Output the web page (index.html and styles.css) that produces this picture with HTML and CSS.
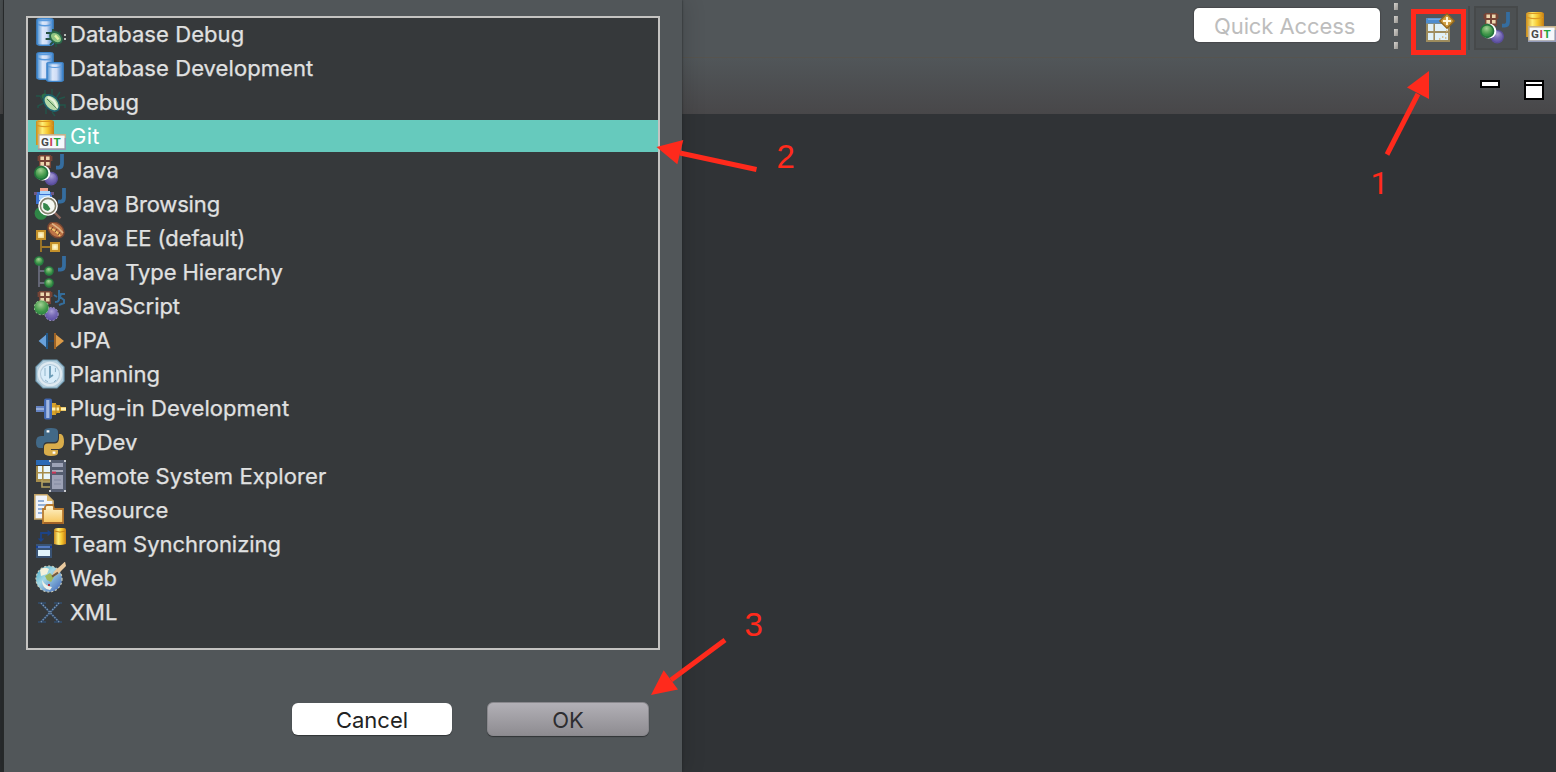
FILE: index.html
```html
<!DOCTYPE html>
<html lang="en">
<head>
<meta charset="utf-8">
<title>Open Perspective</title>
<link rel="stylesheet" href="styles.css">
</head>
<body>
<svg class="defs" width="0" height="0" aria-hidden="true">
  <defs>
    <linearGradient id="blue"><stop offset="0" stop-color="#4b8fd0"/><stop offset=".35" stop-color="#dde8fa"/><stop offset=".6" stop-color="#cfdcf5"/><stop offset="1" stop-color="#3b7fc6"/></linearGradient>
    <linearGradient id="gold"><stop offset="0" stop-color="#c98a1c"/><stop offset=".35" stop-color="#fff07a"/><stop offset=".65" stop-color="#f6c62e"/><stop offset="1" stop-color="#c47d16"/></linearGradient>
    <radialGradient id="green" cx=".45" cy=".3" r=".65"><stop offset="0" stop-color="#a3d296"/><stop offset=".45" stop-color="#62ab60"/><stop offset=".75" stop-color="#3c9448"/><stop offset="1" stop-color="#2f8644"/></radialGradient>
    <radialGradient id="purple" cx=".5" cy=".3" r=".65"><stop offset="0" stop-color="#aaa0d6"/><stop offset=".5" stop-color="#7a6db8"/><stop offset="1" stop-color="#5f52a5"/></radialGradient>
    <linearGradient id="folder" x2="0" y2="1"><stop offset="0" stop-color="#fff6d2"/><stop offset="1" stop-color="#f7c55c"/></linearGradient>
    <radialGradient id="sq"><stop offset="0" stop-color="#fffbe0"/><stop offset="1" stop-color="#f0d474"/></radialGradient>
    <linearGradient id="globe" x2="1" y2="1"><stop offset="0" stop-color="#36a5c4"/><stop offset=".4" stop-color="#a3d8e6"/><stop offset="1" stop-color="#3b5fb6"/></linearGradient>

    <symbol id="bluecyl" viewBox="0 0 9 14" preserveAspectRatio="none">
      <path d="M.5 1Q.5 .4 2 .4H7Q8.500 .4 8.500 1V13Q8 13.600 7 13.600H2Q1 13.600 .5 13Z" fill="url(#blue)" stroke="#3f86cc" stroke-width=".8"/>
      <path d="M1 1.200H8M1 3.200Q4.500 4.500 8 3.200" fill="none" stroke="#5a9ade" stroke-width=".8"/>
    </symbol>
    <symbol id="grid" viewBox="0 0 8 7">
      <path d="M1 .5H7V1H7.700V3.500H7V7H1V3.500H.3V1H1Z" fill="#764436"/>
      <path d="M1.700 1.300H3.500V3H1.700ZM4.500 1.300H6.300V3H4.500ZM1.700 4H3.500V5.700H1.700ZM4.500 4H6.300V5.700H4.500Z" fill="#ecd6ad"/>
    </symbol>
    <symbol id="jay" viewBox="0 0 4 8"><path d="M3 0V4.800Q3 6.800 1.400 6.800H0" fill="none" stroke="#356d9f" stroke-width="1.900"/></symbol>

    <symbol id="i-dbdebug" viewBox="0 0 16 16">
      <use href="#bluecyl" x="1" y="0" width="9" height="14"/>
      <path d="M6 7.500H8L9.500 9M5.800 10.500H9M9.500 5.500V8M8 13.500L10 11.500M11 14.500V12M12 8L13.300 6.500" fill="none" stroke="#24503f" stroke-width=".9"/>
      <ellipse cx="11" cy="9.800" rx="3.300" ry="2.400" transform="rotate(40 11 9.800)" fill="#8fc583" stroke="#2b6a4b" stroke-width=".9"/>
      <path d="M10.500 8.700L12.300 10.700" stroke="#e3f3a8" stroke-width="1.200"/>
      <path d="M15 8.500H16M15 10.500H16" stroke="#b8beba" stroke-width=".9"/>
    </symbol>
    <symbol id="i-dbdev" viewBox="0 0 16 16">
      <use href="#bluecyl" x="1" y="0" width="9" height="14"/>
      <use href="#bluecyl" x="6" y="5" width="9" height="10"/>
    </symbol>
    <symbol id="i-debug" viewBox="0 0 16 16">
      <path d="M5.500 2V4.500L3.500 5M1 5H3L5 8.500L2 10V11M6 11V14M9 13L10.500 15M9 1.500V4.500L11 6L13 3M12.500 6.500L15.500 5.500M13 9.500H15.500V11" fill="none" stroke="#23554a" stroke-width=".7"/>
      <circle cx="5.300" cy="5.200" r="1.400" fill="#2f7048"/>
      <ellipse cx="8.800" cy="8.500" rx="4.700" ry="3.100" transform="rotate(47 8.800 8.500)" fill="#b5d9a8" stroke="#1d6370" stroke-width=".8"/>
      <path d="M6.800 5.700Q10.500 6.500 11.500 11" fill="none" stroke="#e7f3dc" stroke-width="1.100"/>
      <path d="M6.500 6.500L11.300 11.200" stroke="#467e51" stroke-width=".5"/>
    </symbol>
    <symbol id="i-git" viewBox="0 0 16 16">
      <path d="M1 .8Q1.400 0 2.500 0H8.500Q9.700 0 10 .8V12.500H1Z" fill="url(#gold)"/>
      <path d="M1.500 2.700Q5.500 4 9.500 2.700M2 .7H9" fill="none" stroke="#dc9822" stroke-width=".6"/>
      <rect x="2.400" y="7.400" width="13.300" height="7.200" fill="#f5f8fc" stroke="#c5b18b" stroke-width=".8"/>
      <path d="M2 14.600H16M15.700 9V14.600" stroke="#929bb9" stroke-width=".8"/>
      <text x="3.500" y="13.100" class="git-label" fill="#4a4a4a">G</text>
      <text x="7.800" y="13.100" class="git-label" fill="#c93d55">I</text>
      <text x="9.800" y="13.100" class="git-label" fill="#23a340">T</text>
    </symbol>
    <symbol id="i-java" viewBox="0 0 16 16">
      <use href="#grid" x="1.500" y="0" width="8" height="7"/>
      <use href="#jay" x="11" y="0" width="4" height="8"/>
      <circle cx="8.600" cy="12.300" r="3.100" fill="url(#purple)" stroke="#5a4e9b" stroke-width=".6"/>
      <circle cx="4.400" cy="9.500" r="3.800" fill="#fff"/>
      <circle cx="3.600" cy="9.500" r="3.200" fill="url(#green)" stroke="#23733c" stroke-width=".8"/>
    </symbol>
    <symbol id="i-browse" viewBox="0 0 16 16">
      <circle cx="3.500" cy="12.700" r="3.200" fill="#2f8646"/>
      <path d="M0 2H10V3.500H9V8H1V3.500H0Z" fill="#3d73d1"/>
      <path d="M3 1.500H8V3H3ZM2.500 3.500H8V6H2.500Z" fill="#a9d4fb"/>
      <path d="M3 0H7V1.500H3Z" fill="#f0a08c"/><path d="M0 2H1.500V3.500H0ZM8.500 2H10V3.500H8.500Z" fill="#705a86"/>
      <use href="#jay" x="12" y="0" width="4" height="8"/>
      <path d="M9.500 11.500L13.200 15.200" stroke="#8a655b" stroke-width="1.200"/>
      <circle cx="7" cy="9" r="4.900" fill="#fff"/>
      <circle cx="7" cy="9" r="3.800" fill="#f4f8f2" stroke="#85836f" stroke-width=".8"/>
      <path d="M4.600 10V7.500Q6.500 7 8.200 10.500L7 11.500Q5.500 11.500 4.600 10Z" fill="#36874b"/>
    </symbol>
    <symbol id="i-jee" viewBox="0 0 16 16">
      <path d="M3.500 8V15M3.500 12.500H8" stroke="#a27a28" stroke-width=".9" fill="none"/>
      <rect x="1.500" y="4.500" width="4" height="4" fill="url(#sq)" stroke="#c3902a"/>
      <rect x="8.500" y="10.500" width="4" height="4" fill="url(#sq)" stroke="#c3902a"/>
      <ellipse cx="11" cy="4" rx="4.500" ry="3.300" transform="rotate(42 11 4)" fill="#bd7346" stroke="#764531" stroke-width=".7"/>
      <path d="M9 .8Q12.500 3 14.500 5.500" stroke="#deb78a" stroke-width=".8" fill="none"/>
      <path d="M7.600 3Q10.500 3.500 13 7" stroke="#f1c36b" stroke-width=".9" fill="none"/>
      <path d="M8.500 4L9.500 2.500M10.500 5L11.500 3.500M12 6.500L13 5" stroke="#6b3a2a" stroke-width=".5"/>
    </symbol>
    <symbol id="i-type" viewBox="0 0 16 16">
      <path d="M2.500 4V15.500M2.500 7.500H6M2.500 13.500H6" stroke="#686b7b" stroke-width=".9" fill="none"/>
      <g fill="url(#green)" stroke="#277c40" stroke-width=".6"><circle cx="2.500" cy="2.500" r="2.100"/><circle cx="7.500" cy="7.500" r="2.100"/><circle cx="7.500" cy="13.500" r="2.100"/></g>
      <use href="#jay" x="12" y="0" width="4" height="8"/>
    </symbol>
    <symbol id="i-js" viewBox="0 0 16 16">
      <use href="#grid" x="1.500" y="0" width="8" height="7"/>
      <path d="M12.500 0V4.500Q12.500 6 10.500 6M10 2.500L11.500 3.500M15.500 2H13.500L13 3.500L15 5V6.500L12.500 7.500" fill="none" stroke="#346d9b" stroke-width="1"/>
      <circle cx="8.800" cy="12" r="3.300" fill="url(#purple)" stroke="#9d94c9" stroke-width=".5" stroke-dasharray="1 .8"/>
      <circle cx="3.700" cy="8.800" r="3.600" fill="url(#green)" stroke="#96c28f" stroke-width=".5" stroke-dasharray="1 1"/>
    </symbol>
    <symbol id="i-jpa" viewBox="0 0 16 16">
      <path d="M6 8.500H11" stroke="#244467" stroke-width=".7"/>
      <path d="M7 4.500V12.500L2.300 8.500Z" fill="#69a1db"/><path d="M6.500 4.500V12.500" stroke="#225889"/>
      <path d="M10 4.500V12.500L15 8.500Z" fill="#dc9b48"/><path d="M10.500 4.500V12.500" stroke="#9c6226"/>
    </symbol>
    <symbol id="i-plan" viewBox="0 0 16 16">
      <path d="M4.500 1H11.500L15 4.500V11.500L11.500 15H4.500L1 11.500V4.500Z" fill="#b4cedd" stroke="#719bb2" stroke-width=".6"/>
      <circle cx="8" cy="8" r="5.600" fill="#b3cbdc" stroke="#dfeaf1" stroke-width="1.100"/>
      <circle cx="8" cy="8" r="4.500" fill="#d9edfa"/>
      <path d="M8 4V9.500L9.500 8.500" fill="none" stroke="#6e9db8" stroke-width=".9"/><path d="M5.500 5V9M10.700 5V7M5.500 11L7 12M10 12L11 11" stroke="#8fb5cb" stroke-width=".5"/>
    </symbol>
    <symbol id="i-plug" viewBox="0 0 16 16">
      <rect x="1" y="7" width="4" height="3" fill="#6684c2"/><path d="M1 8.500H5" stroke="#96add9"/>
      <rect x="5" y="3.200" width="4" height="10.600" rx="1" fill="#4269b3"/><path d="M6.900 4V13" stroke="#a1b8e2" stroke-width="1.600"/>
      <path d="M9 5.500H11V6.500H13V7.500H16V9.500H13V10.500H11V11.500H9Z" fill="#d8a32a"/><path d="M9 8.500H12.500M13.500 8.500H16" stroke="#fff0ab" stroke-width="1.600"/>
      <path d="M11 6V11M13 7V10" stroke="#b8841e" stroke-width=".5"/>
    </symbol>
    <symbol id="i-py" viewBox="0 0 16 16">
      <path d="M5 5V2.500Q5 1 8.500 1Q12 1 12 2.700V6Q12 8 10 8H6.500Q4.500 8 4.500 11H3Q1 11 1 8.200Q1 5 3.500 5H8.500" fill="#426987"/>
      <path d="M12.500 4H13.500Q15 4.500 15 8Q15 11 12.500 11.500H8.500V12H12V13.500Q12 15 8.500 15Q5 15 5 13.300V10.500Q5 8.700 7 8.700H10.500Q12.500 8.700 12.500 6Z" fill="#d9ad4b"/>
      <path d="M6.300 2.700H7.700M9.300 13.300H10.700" stroke="#fff" stroke-width="1.200"/>
    </symbol>
    <symbol id="i-remote" viewBox="0 0 16 16">
      <path d="M1 0H8V2.500H1Z" fill="#2a6ab6"/><path d="M1 3H8V11H1Z" fill="#a68d4b"/>
      <path d="M2 3H4V6H2ZM4.800 3H8V6H4.800ZM2 6.700H4V9.500H2ZM4.800 6.700H8V9.500H4.800Z" fill="#e8f7fb"/>
      <path d="M4 10V13.500H8M4 11H8" fill="none" stroke="#b3a163" stroke-width=".8"/>
      <rect x="8" y="0" width="8" height="16" fill="#555d70"/>
      <path d="M9 1.500H14.500V3.500H9ZM9 7.500H14.500V14.500H9Z" fill="#9da2b6"/><path d="M9 5.500H14.500" stroke="#a9acbb" stroke-width="1"/>
      <path d="M9 6.300H11" stroke="#cb3656"/><path d="M10 10H13.500M10 12H13.500" stroke="#8188a0" stroke-width=".6"/>
      <path d="M7.500 .5H8.500M15 .5H16M7.500 15.500H8.500M15 15.500H16" stroke="#c8cbd0"/>
    </symbol>
    <symbol id="i-resource" viewBox="0 0 16 16">
      <path d="M.4 .4H6.500L9.600 3.500V12.500H.4Z" fill="#f0f4fb" stroke="#c1a266" stroke-width=".8"/><path d="M6.500 .4V3.500H9.600Z" fill="#dcb96f"/>
      <path d="M2 3.500H5M2 5.500H7M2 7.500H5M2 9.500H4" stroke="#7499cc" stroke-width=".8"/>
      <path d="M4.500 14V7.500H5.500V6.500L6.500 5.500H9.500L10 7.500H14.500V14.500H4.500Z" fill="url(#folder)" stroke="#b97a2e" stroke-width=".9"/>
      <path d="M6 6.700H9.500" stroke="#fff3ce"/><path d="M5 14.500H14.500" stroke="#945423" stroke-width=".6"/>
    </symbol>
    <symbol id="i-team" viewBox="0 0 16 16">
      <path d="M3.500 6V2.500H7.500" fill="none" stroke="#1d4385" stroke-width=".9"/><path d="M1.800 5.300L3.500 7L5.200 5.300ZM6.800 .9L8.800 2.500L6.800 4.100Z" fill="#1d4385"/>
      <path d="M10 .7Q10.500 0 12 0H14.500Q16 0 16 .7V8Q13 9 10 8Z" fill="url(#gold)"/><path d="M10 1.500Q13 2.600 16 1.500" stroke="#c98517" stroke-width=".5" fill="none"/>
      <rect x="1" y="8" width="8" height="7" fill="#395374"/><path d="M1 9.500H9" stroke="#163f99"/><path d="M2 9.500H8" stroke="#92b8eb" stroke-width=".5"/><path d="M2 11H8V14H2Z" fill="#e0f4fd"/>
    </symbol>
    <symbol id="i-web" viewBox="0 0 16 16">
      <circle cx="7.500" cy="8.500" r="6.500" fill="url(#globe)" stroke="#c7cdbc" stroke-width=".6" stroke-dasharray="1 1"/>
      <path d="M3 4Q5 2 7.500 3.500L6.500 6L3.500 7Z" fill="#f4f1dc"/><path d="M5.500 7L8 5.500L10 7.500L8.500 10L6.500 9Z" fill="#9eb85e"/>
      <path d="M4 9Q5.500 12 9 12.500L8 14Q4 13.500 4 9Z" fill="#f0f1e6"/><path d="M7 11.500H8" stroke="#aa3040"/>
      <path d="M9 7Q10 4 12 3L15.500 -.2L16 2L13 5Q11 7.500 9 7Z" fill="#e9c99e"/><path d="M9 7.300L12 5.300" stroke="#715a42"/>
    </symbol>
    <symbol id="i-xml" viewBox="0 0 16 16">
      <path d="M2 3.500H6M10 3.500H14M2 13H6M10 13H14" stroke="#334f70" stroke-width=".7"/>
      <path d="M3.500 3.500L12.500 13M12.500 3.500L3.500 13" stroke="#344f70" stroke-width="1"/>
      <path d="M3.500 3.500L12.500 13M12.500 3.500L3.500 13" stroke="#829bb5" stroke-width=".7" stroke-dasharray=".6 .8"/>
    </symbol>
    <symbol id="i-new" viewBox="0 0 16 16">
      <rect x="1" y="3" width="12" height="12" fill="#9e8c5d"/>
      <path d="M1.500 3H10.500L9 5.800H1V3.500Z" fill="#4d8dcf"/><path d="M2 3.600H9" stroke="#85b9e9" stroke-width=".5"/>
      <path d="M2 6H4.700V9.500H2ZM5.500 6H12V9.500H5.500ZM2 10.500H4.700V14H2ZM5.500 10.500H12V14H5.500Z" fill="#e0f1f8"/>
      <path d="M7.500 13.500H8.200M9 12.500H9.700M10.500 11H11.200M10.500 13H11.200M11 9.500H11.700" stroke="#d5b278" stroke-width=".8"/>
      <path d="M11.500 .9L15.100 4.500L11.500 8.100L7.900 4.500Z" fill="#cf9f42" stroke="#95681b" stroke-width=".7"/><path d="M11.500 2.500V6.500M9.500 4.500H13.500" stroke="#fff8dc" stroke-width="1"/>
    </symbol>
  </defs>
</svg>

<div class="screen">
  <div class="edge"></div>
  <section class="dialog">
    <ul class="list">
      <li class="row"><svg class="icon"><use href="#i-dbdebug"/></svg><span>Database Debug</span></li>
      <li class="row"><svg class="icon"><use href="#i-dbdev"/></svg><span>Database Development</span></li>
      <li class="row"><svg class="icon"><use href="#i-debug"/></svg><span>Debug</span></li>
      <li class="row selected"><svg class="icon"><use href="#i-git"/></svg><span>Git</span></li>
      <li class="row tight"><svg class="icon"><use href="#i-java"/></svg><span>Java</span></li>
      <li class="row tight"><svg class="icon"><use href="#i-browse"/></svg><span>Java Browsing</span></li>
      <li class="row snug"><svg class="icon"><use href="#i-jee"/></svg><span>Java EE (default)</span></li>
      <li class="row snug"><svg class="icon"><use href="#i-type"/></svg><span>Java Type Hierarchy</span></li>
      <li class="row snug"><svg class="icon"><use href="#i-js"/></svg><span>JavaScript</span></li>
      <li class="row"><svg class="icon"><use href="#i-jpa"/></svg><span>JPA</span></li>
      <li class="row"><svg class="icon"><use href="#i-plan"/></svg><span>Planning</span></li>
      <li class="row"><svg class="icon"><use href="#i-plug"/></svg><span>Plug-in Development</span></li>
      <li class="row"><svg class="icon"><use href="#i-py"/></svg><span>PyDev</span></li>
      <li class="row"><svg class="icon"><use href="#i-remote"/></svg><span>Remote System Explorer</span></li>
      <li class="row"><svg class="icon"><use href="#i-resource"/></svg><span>Resource</span></li>
      <li class="row snug"><svg class="icon"><use href="#i-team"/></svg><span>Team Synchronizing</span></li>
      <li class="row"><svg class="icon"><use href="#i-web"/></svg><span>Web</span></li>
      <li class="row"><svg class="icon"><use href="#i-xml"/></svg><span>XML</span></li>
    </ul>
    <div class="buttons">
      <button class="btn cancel">Cancel</button>
      <button class="btn ok">OK</button>
    </div>
  </section>
  <main class="workbench">
    <div class="toolbar">
      <div class="search">Quick Access</div>
      <div class="handle"><i></i><i></i><i></i><i></i></div>
      <div class="marked"><svg class="icon"><use href="#i-new"/></svg></div>
      <div class="divider"></div>
      <div class="tool active"><svg class="icon"><use href="#i-java"/></svg></div>
      <div class="tool git"><svg class="icon"><use href="#i-git"/></svg></div>
    </div>
    <div class="tabbar"><div class="minimize"></div><div class="maximize"></div></div>
    <div class="editor"></div>
  </main>
  <svg class="notes" viewBox="0 0 1556 772">
    <g stroke="#ff2a1c" stroke-width="5">
      <path d="M1387 154.500L1418 94"/><path d="M756.500 169.500L680 153"/><path d="M725 640L671 680"/>
    </g>
    <g fill="#ff2a1c">
      <path d="M1429 71V99L1407 87.500Z"/><path d="M656.500 147L683.300 140L677.300 164.300Z"/><path d="M651 695L663.700 670.300L678 689.500Z"/>
      <text class="num one" x="1370.500" y="194">1</text><text class="num" x="776.500" y="168">2</text><text class="num" x="744.500" y="636">3</text>
    </g>
  </svg>
</div>
</body>
</html>
```
FILE: styles.css
```css
* { box-sizing: border-box; }
body { margin: 0; background: #303336; font-family: Inter, "Liberation Sans", sans-serif; font-size: 22px; }
.defs { position: absolute; }
.git-label { font: bold 5.8px Roboto, sans-serif; }
.screen { position: relative; display: flex; width: 1556px; height: 772px; overflow: hidden; }
.edge { width: 4px; border-right: 1px solid #2c2f31; background: linear-gradient(#484d4f 0, #484d4f 57px, #424243 114px, #282b2d 114px); }
.dialog { width: 678px; padding: 16px 22px 0; background: #515659; box-shadow: 0 0 2px #202325, 4px 0 20px rgba(0, 0, 0, .12); z-index: 1; }
.list { display: flex; flex-direction: column; gap: 2px; width: 634px; height: 634px; margin: 0; padding: 0; list-style: none; background: #36393b; border: 2px solid #c4c3c1; }
.row { display: flex; align-items: center; gap: 4px; height: 32px; padding-left: 6px; color: #e0e1e1; letter-spacing: .07px; white-space: nowrap; -webkit-text-stroke: .25px currentColor; }
.row.snug { letter-spacing: -.05px; }
.row.tight { letter-spacing: -.15px; }
.row.selected { background: #66cabd; color: #fff; letter-spacing: .25px; -webkit-text-stroke: 0; }
.icon { display: block; width: 32px; height: 32px; flex: none; overflow: hidden; -webkit-text-stroke: 0; }
.buttons { display: flex; justify-content: flex-end; align-items: center; gap: 35px; margin-top: 52px; padding-right: 11px; }
.btn { display: block; padding: 2px 0 0; border: 0; border-radius: 6px; font: inherit; color: #222; box-shadow: 0 1px 1px rgba(0, 0, 0, .4); }
.cancel { width: 160px; height: 32px; background: #fff; }
.ok { width: 162px; height: 34px; color: #2d2d30; background: linear-gradient(#b2b0b6, #8e8c91); border: 1px solid #89888d; }
.workbench { flex: 1; display: flex; flex-direction: column; min-width: 0; }
.toolbar { display: flex; justify-content: flex-end; height: 58px; background: #515659; border-bottom: 1px solid #56544f; }
.search { width: 186px; height: 34px; margin: 8px 14px 0 0; padding-left: 20px; border-radius: 5px; background: #fff; color: #bdbdbd; line-height: 37px; letter-spacing: -.1px; box-shadow: 0 0 1px 1px #46494b; white-space: nowrap; }
.handle { display: flex; flex-direction: column; gap: 6px; width: 4px; margin: 3px 13px 0 0; }
.handle i { width: 4px; height: 7px; background: linear-gradient(120deg, #d5d3cf, #96938e); }
.marked { width: 55px; height: 46px; margin-top: 9px; border: 5px solid #ff2a1c; }
.marked .icon { margin: -2px 0 0 8px; }
.divider { width: 2px; height: 44px; margin: 6px 4px 0 2px; background: #484b4c; }
.tool { height: 44px; margin-top: 6px; padding-top: 6px; }
.active { width: 44px; padding: 4px 0 0 4px; border: 2px solid #46494a; background: #4c5052; }
.git { width: 38px; padding-left: 6px; }
.tabbar { display: flex; justify-content: flex-end; gap: 24px; height: 56px; padding: 22px 12px 0 0; background: linear-gradient(#515659, #484749); }
.minimize { width: 20px; height: 8px; border: 2px solid #000; background: #fff; }
.maximize { width: 20px; height: 20px; border: 2px solid #000; background: linear-gradient(#fff 2px, #000 2px, #000 4px, #fff 4px); }
.editor { flex: 1; background: #303336; }
.notes { position: absolute; inset: 0; width: 1556px; height: 772px; z-index: 2; pointer-events: none; }
.num { font: 33px "Liberation Sans", sans-serif; }
.one { font-family: Roboto, sans-serif; font-size: 32px; font-weight: 400; }
```
